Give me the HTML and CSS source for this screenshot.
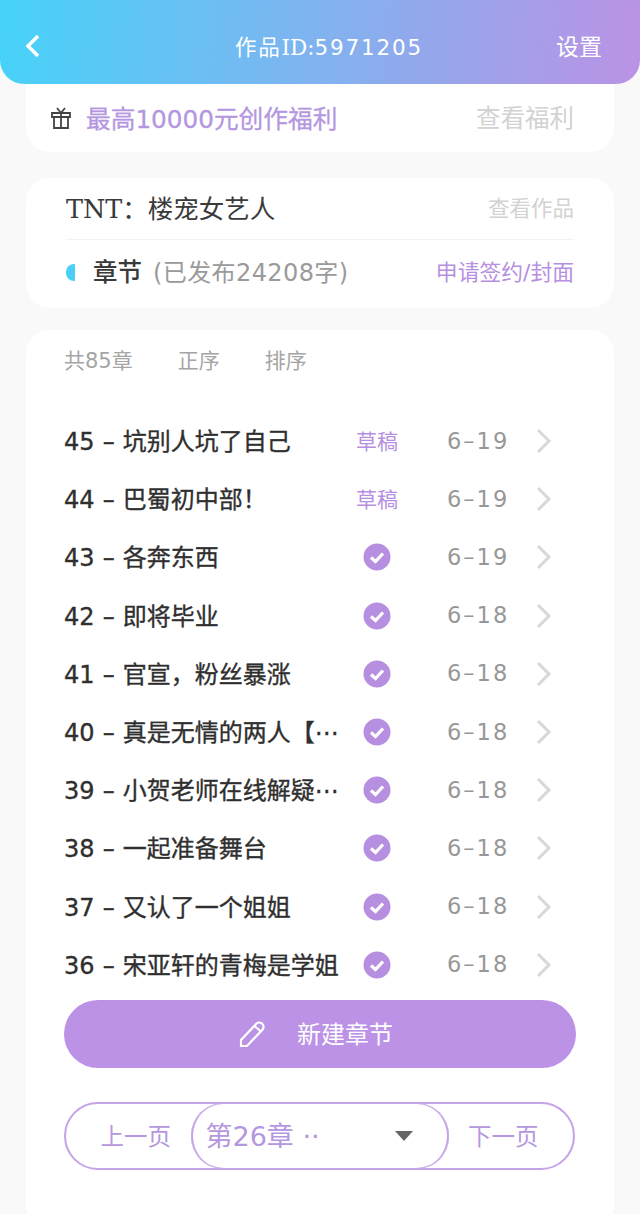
FILE: index.html
```html
<!DOCTYPE html>
<html lang="zh-CN">
<head>
    <meta charset="UTF-8" />
    <title>作品ID:5971205</title>
    <link rel="stylesheet" href="styles.css">
</head>
<body>
<header class="topbar">
    <svg class="back" width="16" height="24" viewBox="0 0 16 24"><path d="M14 2 L4 12 L14 22" /></svg>
    <div class="topbar-title">作品<span class="topbar-id">ID:</span>5971205</div>
    <div class="topbar-action">设置</div>
</header>

<main class="content">
    <section class="card welfare">
        <svg class="gift" width="20" height="22" viewBox="0 0 20 22">
            <path d="M1 6 H19 V10 H1 Z M3 10 V21 H17 V10 M10 6 V21 M10 6 L6 1 M10 6 L14 1" />
        </svg>
        <span class="welfare-text">最高10000元创作福利</span>
        <span class="welfare-link">查看福利</span>
    </section>

    <section class="card work">
        <div class="work-head">
            <span class="work-name">TNT：楼宠女艺人</span>
            <span class="work-link">查看作品</span>
        </div>
        <div class="work-foot">
            <span class="half-dot"></span>
            <span class="chapters-label">章节</span>
            <span class="chapters-count">(已发布24208字)</span>
            <span class="sign-link">申请签约/封面</span>
        </div>
    </section>

    <section class="card list">
        <div class="list-tools">
            <span class="tool-count">共85章</span>
            <span class="tool">正序</span>
            <span class="tool">排序</span>
        </div>

        <ul class="chapters">
            <li class="chapter">
                <span class="chapter-title">45 – 坑别人坑了自己</span>
                <span class="status draft">草稿</span>
                <span class="date">6–19</span>
                <svg class="chevron" width="18" height="26" viewBox="0 0 18 26"><path d="M3 2 L14 13 L3 24" /></svg>
            </li>
            <li class="chapter">
                <span class="chapter-title">44 – 巴蜀初中部！</span>
                <span class="status draft">草稿</span>
                <span class="date">6–19</span>
                <svg class="chevron" width="18" height="26" viewBox="0 0 18 26"><path d="M3 2 L14 13 L3 24" /></svg>
            </li>
            <li class="chapter">
                <span class="chapter-title">43 – 各奔东西</span>
                <span class="status"><svg class="check" width="28" height="28" viewBox="0 0 28 28"><circle cx="14" cy="14" r="13.5" /><path d="M8 14.5 L12.5 18.5 L20 10.5" /></svg></span>
                <span class="date">6–19</span>
                <svg class="chevron" width="18" height="26" viewBox="0 0 18 26"><path d="M3 2 L14 13 L3 24" /></svg>
            </li>
            <li class="chapter">
                <span class="chapter-title">42 – 即将毕业</span>
                <span class="status"><svg class="check" width="28" height="28" viewBox="0 0 28 28"><circle cx="14" cy="14" r="13.5" /><path d="M8 14.5 L12.5 18.5 L20 10.5" /></svg></span>
                <span class="date">6–18</span>
                <svg class="chevron" width="18" height="26" viewBox="0 0 18 26"><path d="M3 2 L14 13 L3 24" /></svg>
            </li>
            <li class="chapter">
                <span class="chapter-title">41 – 官宣，粉丝暴涨</span>
                <span class="status"><svg class="check" width="28" height="28" viewBox="0 0 28 28"><circle cx="14" cy="14" r="13.5" /><path d="M8 14.5 L12.5 18.5 L20 10.5" /></svg></span>
                <span class="date">6–18</span>
                <svg class="chevron" width="18" height="26" viewBox="0 0 18 26"><path d="M3 2 L14 13 L3 24" /></svg>
            </li>
            <li class="chapter">
                <span class="chapter-title">40 – 真是无情的两人【⋯</span>
                <span class="status"><svg class="check" width="28" height="28" viewBox="0 0 28 28"><circle cx="14" cy="14" r="13.5" /><path d="M8 14.5 L12.5 18.5 L20 10.5" /></svg></span>
                <span class="date">6–18</span>
                <svg class="chevron" width="18" height="26" viewBox="0 0 18 26"><path d="M3 2 L14 13 L3 24" /></svg>
            </li>
            <li class="chapter">
                <span class="chapter-title">39 – 小贺老师在线解疑⋯</span>
                <span class="status"><svg class="check" width="28" height="28" viewBox="0 0 28 28"><circle cx="14" cy="14" r="13.5" /><path d="M8 14.5 L12.5 18.5 L20 10.5" /></svg></span>
                <span class="date">6–18</span>
                <svg class="chevron" width="18" height="26" viewBox="0 0 18 26"><path d="M3 2 L14 13 L3 24" /></svg>
            </li>
            <li class="chapter">
                <span class="chapter-title">38 – 一起准备舞台</span>
                <span class="status"><svg class="check" width="28" height="28" viewBox="0 0 28 28"><circle cx="14" cy="14" r="13.5" /><path d="M8 14.5 L12.5 18.5 L20 10.5" /></svg></span>
                <span class="date">6–18</span>
                <svg class="chevron" width="18" height="26" viewBox="0 0 18 26"><path d="M3 2 L14 13 L3 24" /></svg>
            </li>
            <li class="chapter">
                <span class="chapter-title">37 – 又认了一个姐姐</span>
                <span class="status"><svg class="check" width="28" height="28" viewBox="0 0 28 28"><circle cx="14" cy="14" r="13.5" /><path d="M8 14.5 L12.5 18.5 L20 10.5" /></svg></span>
                <span class="date">6–18</span>
                <svg class="chevron" width="18" height="26" viewBox="0 0 18 26"><path d="M3 2 L14 13 L3 24" /></svg>
            </li>
            <li class="chapter">
                <span class="chapter-title">36 – 宋亚轩的青梅是学姐</span>
                <span class="status"><svg class="check" width="28" height="28" viewBox="0 0 28 28"><circle cx="14" cy="14" r="13.5" /><path d="M8 14.5 L12.5 18.5 L20 10.5" /></svg></span>
                <span class="date">6–18</span>
                <svg class="chevron" width="18" height="26" viewBox="0 0 18 26"><path d="M3 2 L14 13 L3 24" /></svg>
            </li>
        </ul>

        <button class="new-chapter">
            <svg class="pencil" width="28" height="28" viewBox="0 0 28 28">
                <path d="M2 26 V20 L17.5 3.5 Q20 1.5 23 3.5 Q25.5 6 24 9 L8 26 Z M15.5 6 L22 11.5" />
            </svg>
            <span class="new-chapter-text">新建章节</span>
        </button>

        <div class="pager">
            <span class="pager-btn pager-prev">上一页</span>
            <div class="pager-select">
                <span class="pager-current">第26章 ··</span>
                <span class="caret"></span>
            </div>
            <span class="pager-btn pager-next">下一页</span>
        </div>
    </section>
</main>
</body>
</html>
```

FILE: styles.css
```css
* {
    box-sizing: border-box;
}

body {
    margin: 0;
    height: 1214px;
    overflow: hidden;
    background: #f9f9f9;
    font-family: "DejaVu Sans", "Noto Sans CJK SC", sans-serif;
}

.topbar {
    height: 84px;
    padding: 6px 38px 0 24px;
    display: flex;
    align-items: center;
    border-radius: 0 0 24px 24px;
    background: linear-gradient(95deg, #46d3f9, #bb92e5);
    color: #fff;
}

.back {
    margin-top: 2px;
}

.back path {
    fill: none;
    stroke: #fff;
    stroke-width: 3.5;
}

.topbar-title {
    margin-left: 195px;
    font-size: 21.5px;
    letter-spacing: 1.8px;
}

.topbar-id {
    font-family: "DejaVu Serif", serif;
    letter-spacing: 0;
}

.topbar-action {
    margin-left: auto;
    font-size: 23px;
}

.content {
    padding: 0 26px;
    display: flex;
    flex-direction: column;
    gap: 26px;
}

.card {
    background: #fff;
    border-radius: 24px;
}

.welfare {
    height: 68px;
    padding: 0 40px 0 25px;
    display: flex;
    align-items: center;
    border-radius: 0 0 24px 24px;
}

.gift {
    margin-right: 15px;
}

.gift path {
    fill: none;
    stroke: #444;
    stroke-width: 1.8;
}

.welfare-text {
    padding-bottom: 2px;
    font-size: 24.7px;
    color: #b497e0;
    -webkit-text-stroke: 0.3px #b497e0;
}

.welfare-link {
    margin-left: auto;
    padding-bottom: 3px;
    font-size: 24.5px;
    color: #d2d2d2;
}

.work {
    height: 130px;
    padding: 0 40px;
    display: flex;
    flex-direction: column;
}

.work-head {
    height: 62px;
    padding-bottom: 5px;
    display: flex;
    align-items: center;
    justify-content: space-between;
    border-bottom: 1px solid #f3f3f3;
}

.work-name {
    font-family: "DejaVu Serif", "Noto Sans CJK SC", serif;
    font-size: 25.5px;
    color: #3a3a3a;
}

.work-link {
    font-size: 21.5px;
    color: #d2d2d2;
}

.work-foot {
    flex: 1;
    padding-bottom: 8px;
    display: flex;
    align-items: center;
}

.half-dot {
    width: 9px;
    height: 17px;
    margin-top: 4px;
    margin-right: 18px;
    border-radius: 8px 0 0 8px;
    background: #4ad0f5;
}

.chapters-label {
    font-size: 24.5px;
    font-weight: 500;
    color: #3a3a3a;
    margin-right: 11px;
}

.chapters-count {
    font-size: 24px;
    letter-spacing: 0.4px;
    color: #9a9a9a;
}

.sign-link {
    margin-left: auto;
    font-size: 21.8px;
    color: #b78fe0;
}

.list {
    height: 900px;
    margin-top: -4px;
    padding: 14px 38px;
}

.list-tools {
    height: 30px;
    display: flex;
    align-items: center;
    gap: 45px;
    font-size: 21px;
    color: #a5a5a5;
}

.chapters {
    list-style: none;
    margin: 38px 0 0;
    padding: 0;
}

.chapter {
    height: 58.2px;
    display: grid;
    grid-template-columns: 276px 74px 121px 18px;
    align-items: center;
}

.chapter-title {
    padding-bottom: 3px;
    font-size: 24px;
    word-spacing: 0.5px;
    color: #2f2f2f;
    -webkit-text-stroke: 0.35px #2f2f2f;
    white-space: nowrap;
    overflow: hidden;
}

.status {
    display: flex;
    justify-content: center;
}

.draft {
    padding-bottom: 2px;
    font-size: 21px;
    color: #b78fe0;
}

.check circle {
    fill: #b78fe0;
}

.check path {
    fill: none;
    stroke: #fff;
    stroke-width: 3.2;
}

.date {
    padding-left: 33px;
    padding-bottom: 1px;
    font-size: 22.5px;
    letter-spacing: 2px;
    color: #979797;
}

.chevron path {
    fill: none;
    stroke: #d8d8d8;
    stroke-width: 3;
}

.new-chapter {
    width: 512px;
    height: 68px;
    margin-top: 6.5px;
    padding: 0 8px 0 0;
    border: none;
    border-radius: 34px;
    display: flex;
    align-items: center;
    justify-content: center;
    gap: 30px;
    background: #bb92e5;
    color: #fff;
    font-family: inherit;
    font-size: 24px;
}

.new-chapter-text {
    padding-bottom: 3px;
}

.pencil path {
    fill: none;
    stroke: #fff;
    stroke-width: 2.2;
}

.pager {
    width: 511px;
    height: 68px;
    margin-top: 34px;
    display: flex;
    align-items: stretch;
    border: 2px solid #c4a3e6;
    border-radius: 34px;
}

.pager-btn {
    flex: 1;
    padding-bottom: 3px;
    display: flex;
    align-items: center;
    justify-content: center;
    font-size: 23.5px;
    color: #b497e0;
}

.pager-prev {
    padding-left: 15px;
}

.pager-next {
    padding-right: 15px;
}

.pager-select {
    width: 258px;
    padding: 0 34px 3px 13px;
    display: flex;
    align-items: center;
    justify-content: space-between;
    border: 2px solid #c4a3e6;
    border-top-width: 0;
    border-bottom-width: 0;
    border-radius: 34px;
    box-shadow: 0 -1px 0 #c4a3e6, 0 1px 0 #c4a3e6;
}

.pager-current {
    font-size: 27px;
    color: #b497e0;
}

.caret {
    width: 0;
    height: 0;
    margin-top: 3px;
    border-left: 9px solid transparent;
    border-right: 9px solid transparent;
    border-top: 10px solid #666;
}
```
